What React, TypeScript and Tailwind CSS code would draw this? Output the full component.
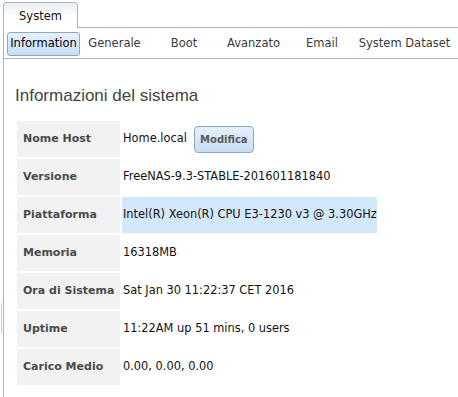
import React from "react";

const rows: { label: string; value: React.ReactNode; hl?: boolean }[] = [
  { label: "Nome Host", value: null },
  { label: "Versione", value: "FreeNAS-9.3-STABLE-201601181840" },
  { label: "Piattaforma", value: "Intel(R) Xeon(R) CPU E3-1230 v3 @ 3.30GHz", hl: true },
  { label: "Memoria", value: "16318MB" },
  { label: "Ora di Sistema", value: "Sat Jan 30 11:22:37 CET 2016" },
  { label: "Uptime", value: "11:22AM up 51 mins, 0 users" },
  { label: "Carico Medio", value: "0.00, 0.00, 0.00" },
];

const subTabs = [
  { label: "Generale", w: "w-[69px]" },
  { label: "Boot", w: "w-[70px]" },
  { label: "Avanzato", w: "w-[69px]" },
  { label: "Email", w: "w-[68px]" },
  { label: "System Dataset", w: "w-[97px]" },
];

export default function App() {
  return (
    <div
      className="relative w-[458px] h-[397px] bg-white overflow-hidden text-[11px] text-[#1a1a1a]"
      style={{ fontFamily: '"DejaVu Sans", Verdana, sans-serif' }}
    >
      {/* splitter handle */}
      <div className="absolute left-[1px] top-[303px] w-px h-[30px] bg-[#c3cad4]" />
      <div className="pl-[3px] pt-[2px]">
        <div className="flex">
          <div className="w-[75px] h-[26px] border border-b-0 border-[#aab5c4] rounded-t-[4px] bg-gradient-to-b from-[#e9eef4] via-white to-white flex items-center justify-center text-[11.5px] text-[#111] pt-[3px]">
            System
          </div>
          <div className="flex-1 border-b border-[#aab5c4]" />
        </div>
        <div className="border-l border-[#aab5c4] h-[369px]">
          <div className="h-[31px] border-b border-[#aab5c4] flex items-center pl-[3px] pt-[1px]">
            <div className="w-[73px] h-[24px] border border-[#8ea7c6] rounded-[3px] bg-gradient-to-b from-[#e6f1fc] to-[#c9def4] flex items-center justify-center text-[11.5px] text-black">
              Information
            </div>
            {subTabs.map((t) => (
              <div
                key={t.label}
                className={`${t.w} flex items-center justify-center text-[11.5px] text-[#3a3a3a]`}
              >
                {t.label}
              </div>
            ))}
          </div>
          <div className="pl-[11px]">
            <h1
              className="mt-[27px] text-[17px] leading-[20px] text-[#444]"
              style={{ fontFamily: '"Liberation Sans", Arial, sans-serif' }}
            >
              Informazioni del sistema
            </h1>
            <table className="mt-[13px] border-separate border-spacing-[2px]">
              <tbody>
                {rows.map((r) => (
                  <tr key={r.label}>
                    <td className="w-[103px] h-[36px] bg-[#f2f2f2] pl-[6px] font-bold text-[#4a4a4a] text-[11px] whitespace-nowrap p-0">
                      {r.label}
                    </td>
                    <td
                      className={`w-[255px] h-[36px] p-0 pl-[1px] whitespace-nowrap text-[11.4px] text-[#111] ${
                        r.hl ? "bg-[#d4e8fb]" : ""
                      }`}
                    >
                      {r.value === null ? (
                        <div className="flex items-center">
                          <span>Home.local</span>
                          <span className="ml-[7px] mt-[1px] w-[60px] h-[27px] border border-[#8ea7c6] rounded-[4px] bg-gradient-to-b from-[#e6f1fc] to-[#c6dcf3] flex items-center justify-center font-bold text-[10px] text-[#5a5a5a]">
                            Modifica
                          </span>
                        </div>
                      ) : (
                        r.value
                      )}
                    </td>
                  </tr>
                ))}
              </tbody>
            </table>
          </div>
        </div>
      </div>
    </div>
  );
}
